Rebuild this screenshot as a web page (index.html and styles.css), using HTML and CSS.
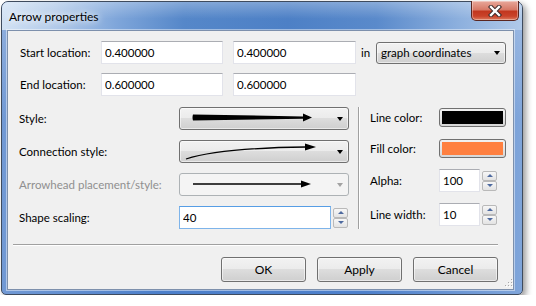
FILE: index.html
```html
<!DOCTYPE html>
<html lang="en">
<head>
    <meta charset="UTF-8">
    <title>Arrow properties</title>
    <link rel="stylesheet" href="styles.css">
</head>
<body>
    <div class="window">
        <div class="titlebar">
            <span class="title">Arrow properties</span>
            <div class="close">
                <svg width="14" height="12" viewBox="0 0 14 12">
                    <path d="M3,2 L11,10 M11,2 L3,10" stroke="#3b2a2a" stroke-width="4.4" stroke-linecap="square"/>
                    <path d="M3,2 L11,10 M11,2 L3,10" stroke="#fff" stroke-width="2.4" stroke-linecap="square"/>
                </svg>
            </div>
        </div>
        <div class="client">
            <div class="loc-row">
                <span class="loc-label">Start location:</span>
                <input class="field loc-x" value="0.400000">
                <input class="field loc-y" value="0.400000">
                <span class="in">in</span>
                <div class="combo coords"><span class="combo-text">graph coordinates</span></div>
            </div>
            <div class="loc-row">
                <span class="loc-label">End location:</span>
                <input class="field loc-x" value="0.600000">
                <input class="field loc-y" value="0.600000">
            </div>

            <div class="props">
                <div class="props-left">
                    <div class="prop-row">
                        <span class="prop-label">Style:</span>
                        <div class="combo wide">
                            <svg class="arrow-pic" width="140" height="21" viewBox="0 0 140 21">
                                <path d="M13,6.5 Q12,9.5 13,12.5 L123,10.8 L123,13.5 L132,9.5 L123,5.5 L123,8.4 Z" fill="#000"/>
                            </svg>
                        </div>
                    </div>
                    <div class="prop-row">
                        <span class="prop-label">Connection style:</span>
                        <div class="combo wide">
                            <svg class="arrow-pic" width="140" height="21" viewBox="0 0 140 21">
                                <path d="M6,18 Q40,7 126,6" stroke="#000" stroke-width="1.3" fill="none"/>
                                <path d="M125,2.5 L136,6 L125,9.5 Z" fill="#000"/>
                            </svg>
                        </div>
                    </div>
                    <div class="prop-row">
                        <span class="prop-label disabled">Arrowhead placement/style:</span>
                        <div class="combo wide off">
                            <svg class="arrow-pic" width="140" height="21" viewBox="0 0 140 21">
                                <path d="M13,10 L122,10" stroke="#000" stroke-width="1.3"/>
                                <path d="M121,6.5 L131,10 L121,13.5 Z" fill="#000"/>
                            </svg>
                        </div>
                    </div>
                    <div class="prop-row">
                        <span class="prop-label">Shape scaling:</span>
                        <div class="spin-box">
                            <input class="field scaling focus" value="40">
                            <div class="spin">
                                <div class="spin-btn up"></div>
                                <div class="spin-btn down"></div>
                            </div>
                        </div>
                    </div>
                </div>
                <div class="vsep"></div>
                <div class="props-right">
                    <div class="side-row short">
                        <span class="side-label">Line color:</span>
                        <div class="color-btn"><div class="swatch" style="background: #000000;"></div></div>
                    </div>
                    <div class="side-row short">
                        <span class="side-label">Fill color:</span>
                        <div class="color-btn"><div class="swatch" style="background: #ff8040;"></div></div>
                    </div>
                    <div class="side-row">
                        <span class="side-label">Alpha:</span>
                        <input class="field small" value="100">
                        <div class="spin">
                            <div class="spin-btn up"></div>
                            <div class="spin-btn down"></div>
                        </div>
                    </div>
                    <div class="side-row">
                        <span class="side-label">Line width:</span>
                        <input class="field small" value="10">
                        <div class="spin">
                            <div class="spin-btn up"></div>
                            <div class="spin-btn down"></div>
                        </div>
                    </div>
                </div>
            </div>

            <div class="hsep"></div>

            <div class="buttons">
                <button class="btn">OK</button>
                <button class="btn">Apply</button>
                <button class="btn">Cancel</button>
            </div>

            <svg class="grip" width="9" height="9" viewBox="0 0 9 9">
                <g fill="#fff">
                    <rect x="8" y="2" width="1" height="1"/><rect x="8" y="5" width="1" height="1"/><rect x="8" y="8" width="1" height="1"/>
                    <rect x="5" y="5" width="1" height="1"/><rect x="5" y="8" width="1" height="1"/><rect x="2" y="8" width="1" height="1"/>
                </g>
                <g fill="#a8a8a8">
                    <rect x="7" y="1" width="1" height="1"/><rect x="7" y="4" width="1" height="1"/><rect x="7" y="7" width="1" height="1"/>
                    <rect x="4" y="4" width="1" height="1"/><rect x="4" y="7" width="1" height="1"/><rect x="1" y="7" width="1" height="1"/>
                </g>
            </svg>
        </div>
    </div>
</body>
</html>
```

FILE: styles.css
```css
*{
    box-sizing: border-box;
}

body{
    margin: 0;
    background-color: #ffffff;
    font-family: "Segoe UI", Lato, "Liberation Sans", sans-serif;
    font-size: 11.5px;
    color: #000;
}

/* window frame */
.window{
    position: relative;
    display: flex;
    flex-direction: column;
    margin: 1px 0 0 1px;
    width: 522px;
    height: 294px;
    border: 1px solid #3e4b5e;
    border-radius: 7px 7px 5px 5px;
    background: linear-gradient(to bottom, rgba(255,255,255,0.25), rgba(255,255,255,0) 120px),
                linear-gradient(to right, #7199d4 0%, #4c7fca 30%, #4e80cb 70%, #7fa5da 100%);
    box-shadow: 3px 3px 6px rgba(0, 0, 0, 0.4);
}

.titlebar{
    height: 28px;
    padding-left: 7px;
    display: flex;
    align-items: center;
    border-radius: 6px 6px 0 0;
    background: linear-gradient(to bottom, rgba(255,255,255,0.28), rgba(255,255,255,0) 60%),
                linear-gradient(to right, #d2e2f4 0%, #b3cbea 10%, #7fa6da 22%, #5587c9 35%, #4d80c6 55%, #5a8acb 72%, #8db0de 88%, #b0c9e9 100%);
}
.title{
    font-size: 12px;
    text-shadow: 0 0 6px #fff, 0 0 10px rgba(255, 255, 255, 0.9);
}
.close{
    position: absolute;
    top: -1px;
    right: 3px;
    width: 48px;
    height: 20px;
    display: flex;
    align-items: center;
    justify-content: center;
    border: 1px solid #5a2620;
    border-top: none;
    border-radius: 0 0 5px 5px;
    background: linear-gradient(to bottom, #e8a89b 0%, #d77a68 45%, #c2371f 55%, #c9432a 80%, #dd7a5e 100%);
    box-shadow: inset 0 0 0 1px rgba(255, 255, 255, 0.35);
}

/* client area */
.client{
    position: relative;
    flex: 1;
    margin: 0 8px 4px 5px;
    padding-top: 10px;
    background-color: #f0f0f0;
    border: 1px solid #7d90ac;
    box-shadow: 0 0 0 1px rgba(255, 255, 255, 0.45);
}

.loc-row{
    display: flex;
    align-items: center;
    height: 23px;
    padding-left: 12px;
}
.loc-row + .loc-row{
    margin-top: 9px;
}
.loc-label{
    flex: none;
    width: 81px;
    padding-right: 16px;
    text-align: right;
    white-space: nowrap;
}
.field{
    height: 23px;
    padding: 0 3px;
    border: 1px solid #e2e3ea;
    border-top-color: #abadb3;
    background-color: #fff;
    font: inherit;
    color: #000;
    outline: none;
}
.loc-x{
    width: 122px;
}
.loc-y{
    width: 123px;
    margin-left: 10px;
}
.in{
    width: 15px;
    margin-left: 5px;
}

/* combo boxes */
.combo{
    display: flex;
    align-items: center;
    height: 23px;
    border: 1px solid #707070;
    border-radius: 3px;
    background: linear-gradient(to bottom, #f2f2f2 0%, #ebebeb 50%, #dddddd 50%, #cfcfcf 100%);
    box-shadow: inset 0 0 0 1px rgba(255, 255, 255, 0.55);
}
.combo::after{
    content: "";
    margin-left: auto;
    margin-right: 5px;
    border-top: 4px solid #000;
    border-left: 3.5px solid transparent;
    border-right: 3.5px solid transparent;
}
.combo.off{
    border-color: #adb2b5;
    background: #f4f4f4;
    box-shadow: none;
}
.combo.off::after{
    border-top-color: #a3a3a3;
}
.coords{
    width: 130px;
    height: 22px;
}
.combo-text{
    padding-left: 4px;
}
.wide{
    width: 170px;
}
.arrow-pic{
    display: block;
    flex: none;
}

/* property panel */
.props{
    display: flex;
    margin-top: 11px;
    padding-left: 11px;
}
.props-left{
    width: 330px;
    display: flex;
    flex-direction: column;
    gap: 10px;
}
.prop-row{
    display: flex;
    align-items: center;
    height: 23px;
}
.prop-label{
    width: 160px;
}
.disabled{
    color: #8f8f8f;
}
.spin-box{
    display: flex;
    align-items: center;
}
.scaling{
    width: 152px;
}
.focus{
    border-color: #7eb4ea;
    border-top-color: #569de5;
}
.spin{
    display: flex;
    flex-direction: column;
    margin-left: 2px;
}
.spin-btn{
    display: flex;
    align-items: center;
    justify-content: center;
    width: 15px;
    height: 10px;
    border: 1px solid #b9b9b9;
    border-radius: 2px;
    background: linear-gradient(to bottom, #f7f7f7, #e3e3e3);
}
.spin-btn::after{
    content: "";
    border-left: 3px solid transparent;
    border-right: 3px solid transparent;
}
.up::after{
    border-bottom: 3px solid #4e6a9f;
}
.down::after{
    border-top: 3px solid #4e6a9f;
}

.vsep{
    width: 2px;
    margin-left: 9px;
    border-left: 1px solid #a0a0a0;
    border-right: 1px solid #ffffff;
}
.props-right{
    width: 136px;
    margin-left: 10px;
    display: flex;
    flex-direction: column;
    gap: 11px;
}
.side-row{
    display: flex;
    align-items: center;
    height: 23px;
}
.side-row.short{
    height: 19px;
    margin-top: 1px;
}
.side-label{
    width: 69px;
}
.color-btn{
    width: 67px;
    height: 19px;
    padding: 2px;
    border: 1px solid #707070;
    border-radius: 3px;
    background: linear-gradient(to bottom, #f2f2f2, #d6d6d6);
}
.swatch{
    height: 100%;
}
.small{
    width: 41px;
}

.hsep{
    height: 2px;
    margin: 15px 15px 0 5px;
    border-top: 1px solid #a0a0a0;
    border-bottom: 1px solid #ffffff;
}

.buttons{
    display: flex;
    justify-content: flex-end;
    gap: 11px;
    margin-top: 11px;
    padding-right: 15px;
}
.btn{
    width: 85px;
    height: 25px;
    border: 1px solid #707070;
    border-radius: 3px;
    background: linear-gradient(to bottom, #f2f2f2 0%, #ebebeb 50%, #dddddd 50%, #cfcfcf 100%);
    box-shadow: inset 0 0 0 1px rgba(255, 255, 255, 0.55);
    font: inherit;
    font-size: 12px;
    color: #000;
}

.grip{
    position: absolute;
    right: 0;
    bottom: 2px;
}
```
